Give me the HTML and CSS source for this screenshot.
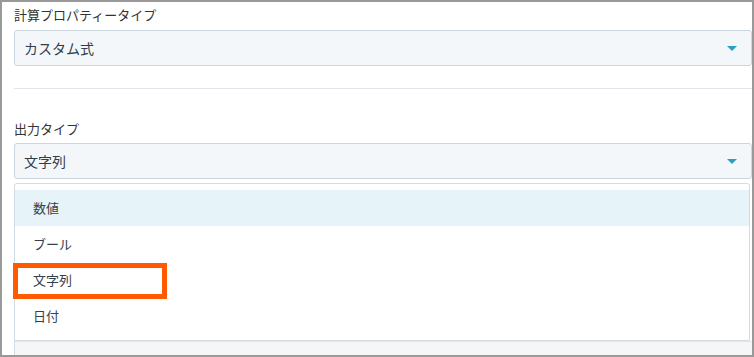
FILE: index.html
```html
<!DOCTYPE html>
<html lang="ja">

<head>
    <meta charset="UTF-8">
    <meta name="viewport" content="width=device-width, initial-scale=1.0">
    <title>出力タイプ</title>
    <link rel="stylesheet" href="styles.css">
</head>

<body>
    <div class="frame">
        <div class="field">
            <label class="field-label">計算プロパティータイプ</label>
            <div class="select">
                <span class="select-value">カスタム式</span>
                <span class="caret"></span>
            </div>
        </div>

        <hr class="divider">

        <div class="field">
            <label class="field-label">出力タイプ</label>
            <div class="select">
                <span class="select-value">文字列</span>
                <span class="caret"></span>
            </div>
            <ul class="dropdown">
                <li class="option hover">数値</li>
                <li class="option">ブール</li>
                <li class="option marked">文字列</li>
                <li class="option">日付</li>
            </ul>
        </div>

        <div class="footer-strip"></div>
    </div>
</body>

</html>
```

FILE: styles.css
```css
html,
body {
    margin: 0;
    padding: 0;
    background-color: #999;
}

body {
    font-family: "Noto Sans CJK JP", "Noto Sans", sans-serif;
    color: #333;
}

.frame {
    box-sizing: border-box;
    width: 754px;
    height: 357px;
    border: 2px solid #999;
    background-color: #fff;
    padding: 3px 0 0 12px;
    overflow: hidden;
    display: flex;
    flex-direction: column;
}

.field {
    display: flex;
    flex-direction: column;
}

.field-label {
    font-size: 13px;
    line-height: 20px;
    color: #333;
    margin-bottom: 5px;
}

.field + .divider + .field .field-label {
    margin-bottom: 4px;
}

.select {
    box-sizing: border-box;
    height: 36px;
    display: flex;
    align-items: center;
    justify-content: space-between;
    padding: 0 14px 0 9px;
    background-color: #f3f7fa;
    border: 1px solid #ccd6df;
    border-radius: 3px;
}

.select-value {
    font-size: 14px;
    color: #2f3d4c;
}

.caret {
    width: 0;
    height: 0;
    border-left: 5px solid transparent;
    border-right: 5px solid transparent;
    border-top: 5px solid #2a9fbf;
}

.divider {
    border: none;
    border-top: 1px solid #dfe5ea;
    margin: 22px 0 30px 0;
}

.dropdown {
    list-style: none;
    margin: 4px 2px 0 0;
    padding: 6px 0 6px 0;
    border: 1px solid #d3dbe3;
    border-radius: 3px 3px 0 0;
    background-color: #fff;
}

.option {
    position: relative;
    height: 36px;
    line-height: 36px;
    padding-left: 18px;
    font-size: 13px;
    color: #34404d;
}

.option.hover {
    background-color: #e6f4fa;
}

/* orange highlight drawn over the row */
.option.marked::after {
    content: "";
    position: absolute;
    left: -2px;
    top: 1px;
    width: 154px;
    height: 36px;
    box-sizing: border-box;
    border: 5px solid #ff5a00;
}

.footer-strip {
    flex: 1;
    border-left: 1px solid #d3dbe3;
    border-top: 1px solid #e3e7ec;
    background-color: #f5f6f7;
}
```
